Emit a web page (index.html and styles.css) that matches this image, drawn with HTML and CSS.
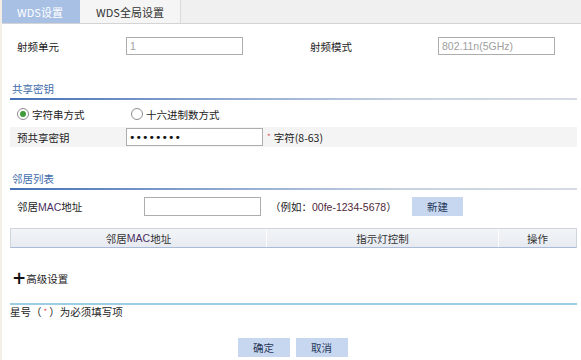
FILE: index.html
```html
<!DOCTYPE html>
<html lang="zh-CN">
<head>
<meta charset="utf-8">
<title>WDS设置</title>
<link rel="stylesheet" href="styles.css">
</head>
<body>
<div class="tabs">
  <div class="tab active">WDS设置</div>
  <div class="tab">WDS全局设置</div>
</div>
<div class="page">
  <div class="row r1">
    <span class="lbl w1">射频单元</span>
    <span class="field dis w117">1</span>
    <span class="lbl w2">射频模式</span>
    <span class="field dis w117">802.11n(5GHz)</span>
  </div>

  <div class="sec-title">共享密钥</div>
  <div class="row radios">
    <span class="radio-opt first"><span class="radio on"></span>字符串方式</span>
    <span class="radio-opt"><span class="radio"></span>十六进制数方式</span>
  </div>
  <div class="row pw">
    <span class="lbl w1">预共享密钥</span>
    <span class="field pwf">••••••••</span>
    <span class="req">*</span><span class="hint">字符(8-63)</span>
  </div>

  <div class="sec-title t2">邻居列表</div>
  <div class="row mac">
    <span class="lbl w3">邻居<span class="lat">MAC</span>地址</span>
    <span class="field w117"></span>
    <span class="example">（例如：<span class="lat2">00fe-1234-5678</span>）</span>
    <span class="btn small">新建</span>
  </div>
  <div class="grid">
    <div class="th c1">邻居<span class="lat">MAC</span>地址</div>
    <div class="th c2">指示灯控制</div>
    <div class="th c3">操作</div>
  </div>

  <div class="adv"><span class="plus">+</span>高级设置</div>
  <div class="note">星号（<span class="req">*</span>）为必须填写项</div>
  <div class="actions">
    <span class="btn">确定</span>
    <span class="btn">取消</span>
  </div>
</div>
</body>
</html>
```

FILE: styles.css
```css
html, body {
  margin: 0;
  padding: 0;
  background: #fff;
}
body {
  font-family: "Noto Sans CJK SC", "Liberation Sans", sans-serif;
  font-size: 10.5px;
  color: #222;
  width: 581px;
  height: 360px;
  overflow: hidden;
  border-left: 2px solid #f3efe6;
  box-sizing: border-box;
}
.tabs {
  display: flex;
  height: 23px;
  background: #f0f0f0;
  border-bottom: 1px solid #d4d4d4;
  margin-left: -2px;
}
.tab {
  display: flex;
  align-items: center;
  justify-content: center;
  width: 100px;
  background: #f5f5f5;
  color: #333;
  border-right: 1px solid #dadada;
  font-size: 11px;
}
.tab.active {
  width: 80px;
  background: #a7c0e4;
  color: #fff;
  border-right: none;
}
.page {
  padding: 0 4px 0 8px;
}
.row {
  display: flex;
  align-items: center;
  padding-left: 7px;
}
.r1 {
  margin-top: 13px;
  height: 18px;
}
.lbl { flex: none; }
.w1 { width: 109px; }
.w2 { width: 128px; margin-left: 67px; }
.w3 { width: 127px; }
.field {
  flex: none;
  box-sizing: border-box;
  height: 18px;
  border: 1px solid #adadad;
  background: #fff;
  display: flex;
  align-items: center;
  padding-left: 3px;
  font-family: "Liberation Sans", sans-serif;
  font-size: 10.5px;
}
.w117 { width: 117px; }
.dis { color: #a0a0a0; }
.sec-title {
  margin-top: 25px;
  height: 18px;
  line-height: 17px;
  padding-left: 2px;
  color: #3f6bab;
  font-size: 10.5px;
  position: relative;
}
.sec-title::after {
  content: "";
  position: absolute;
  left: 0;
  right: 0;
  bottom: -2px;
  height: 2px;
  background: linear-gradient(to right, #4470b4 0%, #8aa6d0 35%, #c8d2e0 70%, #d6dbe3 100%);
}
.sec-title.t2 { margin-top: 23px; }
.radios {
  margin-top: 7px;
  height: 18px;
}
.radio-opt {
  display: flex;
  align-items: center;
}
.radio-opt.first { width: 114px; }
.radio {
  box-sizing: border-box;
  width: 12px;
  height: 12px;
  border: 1px solid #8c8c8c;
  border-radius: 50%;
  background: #fff;
  margin-right: 3px;
  display: flex;
  align-items: center;
  justify-content: center;
}
.radio.on::after {
  content: "";
  width: 6px;
  height: 6px;
  border-radius: 50%;
  background: #3f9c3a;
}
.pw {
  margin-top: 4px;
  height: 20px;
  background: #f4f4f4;
}
.pwf {
  width: 137px;
  color: #111;
  font-family: "DejaVu Sans", sans-serif;
  font-size: 11px;
  letter-spacing: 0;
  padding-left: 2px;
}
.req {
  color: #e05050;
  font-size: 8px;
  margin: 0 3px 0 4px;
  position: relative;
  top: -1px;
}
.hint { font-family: "Noto Sans CJK SC", "Liberation Sans", sans-serif; }
.mac {
  margin-top: 9px;
  height: 19px;
}
.mac .field { height: 19px; }
.lat { color: #4a3060; font-family: "Liberation Sans", sans-serif; }
.lat2 { color: #50283a; font-family: "Liberation Sans", sans-serif; }
.example {
  margin-left: 9px;
  width: 142px;
  flex: none;
}
.btn {
  display: inline-flex;
  align-items: center;
  justify-content: center;
  width: 52px;
  height: 19px;
  background: #c6d7ef;
  color: #28385a;
}
.btn.small { width: 51px; }
.grid {
  margin-top: 12px;
  display: grid;
  grid-template-columns: 255px 232px 1fr;
  height: 20px;
  box-sizing: border-box;
  border: 1px solid #cfd5de;
  border-bottom: 1px solid #a9bbd6;
  background: linear-gradient(#f2f4f7, #e7ebf1);
}
.th {
  display: flex;
  align-items: center;
  justify-content: center;
  color: #333;
}
.c2, .c3 { border-left: 1px solid #fbfcfd; }
.adv {
  margin-top: 21px;
  height: 18px;
  display: flex;
  align-items: center;
  padding-left: 2px;
}
.plus {
  font-family: "DejaVu Sans", sans-serif;
  font-weight: bold;
  font-size: 17px;
  color: #111;
  line-height: 1;
  margin-right: 0;
}
.note {
  margin-top: 16px;
  border-top: 2px solid #9fcde3;
  line-height: 13px;
  padding-top: 0;
}
.note .req { margin: 0 2px; }
.actions {
  margin-top: 19px;
  display: flex;
  justify-content: center;
  gap: 6px;
  padding-right: 2px;
}
```
